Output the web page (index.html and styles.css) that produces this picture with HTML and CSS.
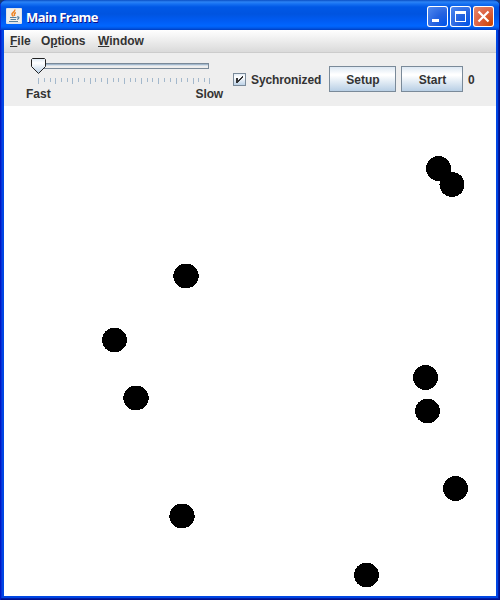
FILE: index.html
```
<!DOCTYPE html>
<html lang="en">
<head>
<meta charset="utf-8">
<title>Main Frame</title>
<link rel="stylesheet" href="styles.css">
</head>
<body>
<div class="window">
  <header class="titlebar">
    <svg class="app-icon" width="16" height="16" viewBox="0 0 16 16">
      <rect width="16" height="16" rx="1" fill="#dfe3e8"/>
      <rect x="1" y="1" width="14" height="13" fill="#f0f0ee"/>
      <path d="M8.8 1.5C9.5 4 5.2 4.6 6 6.500C6.300 7.400 7 7.700 7 8.500M9.800 4.500C7.500 5.500 8.500 6.500 8.500 8" fill="none" stroke="#ee8424" stroke-width="1.500"/>
      <path d="M4 9.500H10.500M4.500 11.500H10M11 9C14 8.500 13 11 11 11.300M3 13.500H12" fill="none" stroke="#58809d" stroke-width="1.200"/>
    </svg>
    <h1 class="title">Main Frame</h1>
    <div class="controls">
      <span class="control"><svg width="21" height="21"><rect x="5" y="13" width="7" height="3" fill="#fff"/></svg></span>
      <span class="control"><svg width="21" height="21"><path d="M5 5h11v11H5zM6 8v7h9V8z" fill="#fff" fill-rule="evenodd"/></svg></span>
      <span class="control close"><svg width="21" height="21"><path d="M5.500 5.500L15.500 15.500M15.500 5.500L5.500 15.500" stroke="#fff" stroke-width="2.200"/></svg></span>
    </div>
  </header>
  <nav class="menubar">
    <span class="menu file"><u>F</u>ile</span>
    <span class="menu options">O<u>p</u>tions</span>
    <span class="menu windows"><u>W</u>indow</span>
  </nav>
  <div class="toolbar">
    <div class="slider">
      <svg class="slider-art" width="196" height="32" viewBox="0 0 196 32" shape-rendering="crispEdges">
        <defs>
          <linearGradient id="thumb" x1="0" y1="0" x2="0" y2="1">
            <stop offset="0" stop-color="#dce9f5"/><stop offset=".3" stop-color="#fff"/><stop offset="1" stop-color="#b8cfe5"/>
          </linearGradient>
        </defs>
        <rect x="12" y="8" width="171" height="6" fill="#7a8a99"/>
        <rect x="12" y="9" width="170" height="1" fill="#a3b8cc"/>
        <rect x="12" y="10" width="170" height="3" fill="#eee"/>
        <rect x="12" y="10" width="170" height="1" fill="#d5dfe8"/>
        <path class="ticks" d="M12.500 23v6M18.500 23v4M24.500 23v4M29.500 23v6M35.500 23v4M41.500 23v4M46.500 23v6M52.500 23v4M58.500 23v4M64.500 23v6M69.500 23v4M75.500 23v4M81.500 23v6M87.500 23v4M92.500 23v4M98.500 23v6M104.500 23v4M109.500 23v4M115.500 23v6M121.500 23v4M126.500 23v4M132.500 23v6M138.500 23v4M144.500 23v4M150.500 23v6M155.500 23v4M161.500 23v4M167.500 23v6M172.500 23v4M178.500 23v4M183.500 23v6"/>
        <path d="M6.500 3.500H18.500L19.500 4.500V11.500L12.500 18.500L5.500 11.500V4.500Z" fill="url(#thumb)" stroke="#222" shape-rendering="auto"/>
      </svg>
      <div class="slider-labels"><span>Fast</span><span class="slow">Slow</span></div>
    </div>
    <label class="check">
      <svg class="check-box" width="13" height="13" viewBox="0 0 13 13">
        <defs><linearGradient id="box" x1="0" y1="0" x2="0" y2="1"><stop offset="0" stop-color="#dde8f3"/><stop offset=".3" stop-color="#fff"/><stop offset="1" stop-color="#b8cfe5"/></linearGradient></defs>
        <rect x=".5" y=".5" width="12" height="12" fill="url(#box)" stroke="#7a8a99"/>
        <path d="M3 5H5V7H6V6H7V5H8V4H9V3H10V5H9V6H8V7H7V8H6V9H5V10H3Z" fill="#333" shape-rendering="crispEdges"/>
      </svg>
      <span class="check-text">Sychronized</span>
    </label>
    <button class="button setup">Setup</button>
    <button class="button start">Start</button>
    <span class="count">0</span>
  </div>
  <main class="canvas">
    <svg width="492" height="490" viewBox="4 106 492 490" shape-rendering="crispEdges">
      <ellipse cx="438.500" cy="168.500" rx="12.500" ry="12.500"/>
      <ellipse cx="452" cy="184.500" rx="12.500" ry="12.500"/>
      <ellipse cx="186" cy="276" rx="12.700" ry="12.300"/>
      <ellipse cx="114.500" cy="340" rx="12.500" ry="12.300"/>
      <ellipse cx="136" cy="398" rx="12.700" ry="12.300"/>
      <ellipse cx="425.500" cy="377.500" rx="12.500" ry="12.500"/>
      <ellipse cx="427.500" cy="411" rx="12.500" ry="12.300"/>
      <ellipse cx="455.500" cy="488.500" rx="12.500" ry="12.500"/>
      <ellipse cx="182" cy="516" rx="12.700" ry="12.300"/>
      <ellipse cx="366.500" cy="575" rx="12.500" ry="12.300"/>
    </svg>
  </main>
</div>
</body>
</html>
```
FILE: styles.css
```
* { box-sizing: border-box; }
body {
  margin: 0;
  background: #163b78;
  font: bold 12px/14px "Liberation Sans", Arial, sans-serif;
  color: #333;
}
svg { display: block; }
.window {
  width: 500px;
  height: 600px;
  padding: 0 4px 4px;
  border-radius: 7px 7px 0 0;
  overflow: hidden;
  background: #0046e4;
  box-shadow: inset 1px 0 #0019c6, inset -1px 0 #00108c, inset 0 -1px #00108c, inset -2px -2px #001da6, inset 2px 0 #0831d9;
}
.titlebar {
  display: flex;
  height: 30px;
  margin: 0 -4px;
  padding: 6px 6px 0;
  background: linear-gradient(#0a4fc4 0, #2b83f6 2px, #1570f2 4px, #0058e6 7px, #0054e0 14px, #005cf4 21px, #0066ff 26px, #0058e8 28px, #003dc0 30px);
  box-shadow: inset 1px 0 #0831d9, inset -1px 0 #00138c;
}
.app-icon { margin-top: 2px; }
.title {
  margin: 3px auto 0 4px;
  font: bold 13px/16px "Open Sans", sans-serif;
  letter-spacing: -0.55px;
  color: #fff;
  text-shadow: 1px 1px #0f1089;
}
.controls { display: flex; gap: 2px; }
.control {
  width: 21px;
  height: 21px;
  border-radius: 3px;
  background: radial-gradient(circle at 90% 90%, #0054e9, #2663e0 45%, #4d86ee 90%);
  box-shadow: inset 0 0 0 1px #fff;
}
.close { background: radial-gradient(circle at 90% 90%, #cc4600, #dc6040 50%, #e48a70 95%); }
.menubar {
  display: flex;
  height: 23px;
  padding: 4px 6px 0;
  background: linear-gradient(#fff, #dadada);
  border-bottom: 1px solid #ccc;
}
.menu { white-space: nowrap; }
.menu u { text-underline-offset: 1px; text-decoration-thickness: 1px; }
.file { width: 31px; }
.options { width: 57px; letter-spacing: -0.15px; }
.toolbar {
  display: flex;
  height: 53px;
  background: #eee;
}
.slider { width: 197px; margin: 2px 0 0 22px; }
.slider-labels { display: flex; justify-content: space-between; }
.slow { letter-spacing: -0.15px; }
.ticks { stroke: #a3b8cc; }
.check { display: flex; gap: 5px; width: 86px; margin: 20px 0 0 10px; white-space: nowrap; }
.check-box { flex: none; }
.check-text { letter-spacing: -0.1px; }
.button {
  height: 26px;
  margin: 13px 0 0;
  padding: 1px 0 0 1px;
  border: 1px solid #7a8a99;
  background: linear-gradient(#dde8f3, #fff 30%, #fff 35%, #b8cfe5);
  font: inherit;
  color: inherit;
}
.setup { width: 67px; margin-left: 10px; }
.start { width: 62px; margin-left: 5px; }
.count { margin: 20px 0 0 5px; }
.canvas { height: 490px; background: #fff; }
```
